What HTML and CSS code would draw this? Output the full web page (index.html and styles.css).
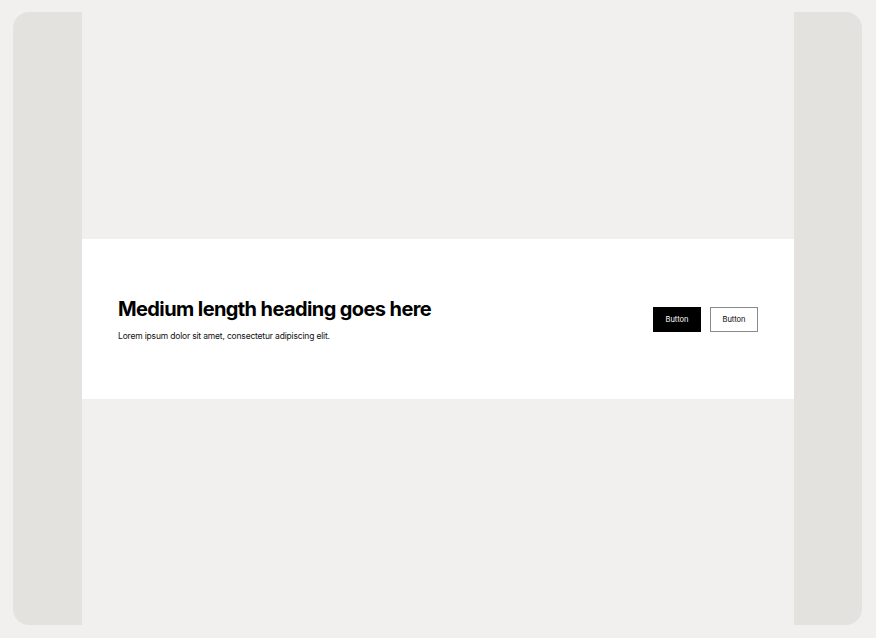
FILE: index.html
```html
<!DOCTYPE html>
<html lang="en">
<head>
<meta charset="utf-8">
<title>CTA</title>
<link rel="stylesheet" href="styles.css">
</head>
<body>
<div class="frame">
  <div class="column">
    <div class="spacer"></div>
    <section class="cta">
      <div class="cta-text">
        <h1 class="cta-title">Medium length heading goes here</h1>
        <p class="cta-desc">Lorem ipsum dolor sit amet, consectetur adipiscing elit.</p>
      </div>
      <div class="cta-actions">
        <button class="btn btn-primary">Button</button>
        <button class="btn btn-secondary">Button</button>
      </div>
    </section>
    <div class="spacer spacer-bottom"></div>
  </div>
</div>
</body>
</html>
```

FILE: styles.css
```css
* { box-sizing: border-box; }
html, body { margin: 0; height: 100%; }
body {
  background: #f1f0ee;
  font-family: Inter, "Noto Sans", sans-serif;
  padding: 12px 14px 13px 13px;
}
.frame {
  height: 613px;
  background: #e3e2de;
  border-radius: 16px;
  display: flex;
  justify-content: center;
  padding: 0 68px 0 69px;
  overflow: hidden;
}
.column {
  flex: 1;
  background: #f1f0ee;
  display: flex;
  flex-direction: column;
}
.spacer { height: 227px; }
.spacer-bottom { flex: 1; height: auto; }
.cta {
  height: 160px;
  background: #ffffff;
  display: flex;
  align-items: center;
  justify-content: space-between;
  padding: 0 36px;
}
.cta-title {
  margin: 0;
  font-size: 20px;
  font-weight: 700;
  line-height: 26px;
  color: #000;
  letter-spacing: -0.6px;
}
.cta-desc {
  margin: 8px 0 0;
  font-size: 8.5px;
  line-height: 13px;
  color: #111;
  letter-spacing: -0.18px;
}
.cta-actions {
  display: flex;
  gap: 9px;
}
.btn {
  width: 48px;
  height: 25px;
  font-family: Inter, "Noto Sans", sans-serif;
  font-size: 7.5px;
  padding: 0;
  border-radius: 0;
  cursor: pointer;
}
.btn-primary {
  background: #000;
  color: #fff;
  border: 1px solid #000;
}
.btn-secondary {
  background: #fff;
  color: #000;
  border: 1px solid #8a8a8a;
}
```
